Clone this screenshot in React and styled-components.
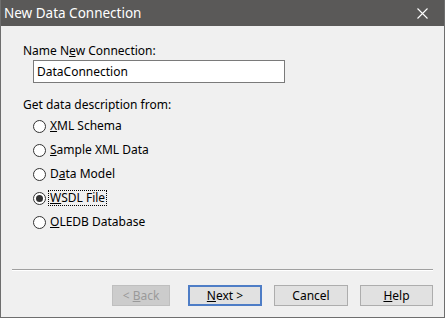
import React, { useState } from 'react'
import styled, { createGlobalStyle } from 'styled-components'

const Global = createGlobalStyle`
  html, body { margin: 0; padding: 0; background: #f0f0f0; }
  body { font-family: "Noto Sans", "Segoe UI", sans-serif; font-size: 12px; color: #000; }
`

const options = [
  { key: 'xml', pre: '', mn: 'X', post: 'ML Schema' },
  { key: 'sample', pre: '', mn: 'S', post: 'ample XML Data' },
  { key: 'model', pre: 'D', mn: 'a', post: 'ta Model' },
  { key: 'wsdl', pre: '', mn: 'W', post: 'SDL File' },
  { key: 'oledb', pre: '', mn: 'O', post: 'LEDB Database' },
]

const App = () => {
  const [name, setName] = useState('DataConnection')
  const [selected, setSelected] = useState('wsdl')

  return (
    <>
      <Global />
      <Window>
        <TitleBar>
          <Title>New Data Connection</Title>
          <CloseBtn aria-label="close">
            <svg width="11" height="11" viewBox="0 0 11 11">
              <path d="M0.5 0.5 L10.5 10.5 M10.5 0.5 L0.5 10.5" stroke="#fff" strokeWidth="1.1" />
            </svg>
          </CloseBtn>
        </TitleBar>
        <Body>
          <Label>Name N<u>e</u>w Connection:</Label>
          <TextInput value={name} onChange={e => setName(e.target.value)} />
          <GroupLabel>Get data description from:</GroupLabel>
          <RadioList>
            {options.map(o => (
              <RadioRow key={o.key} onClick={() => setSelected(o.key)}>
                <Circle $checked={selected === o.key} />
                <RadioText $focus={selected === o.key}>
                  {o.pre}<u>{o.mn}</u>{o.post}
                </RadioText>
              </RadioRow>
            ))}
          </RadioList>
        </Body>
        <Footer>
          <Separator />
          <ButtonRow>
            <Button $w={58} disabled>&lt; <u>B</u>ack</Button>
            <Button $w={74} $default style={{ marginLeft: 6 }}><u>N</u>ext &gt;</Button>
            <Button $w={74}>Cancel</Button>
            <Button $w={73}><u>H</u>elp</Button>
          </ButtonRow>
        </Footer>
      </Window>
    </>
  )
}

const Window = styled.div`
  width: 445px;
  height: 318px;
  box-sizing: border-box;
  border: 1px solid #6e6e6e;
  border-top: none;
  display: flex;
  flex-direction: column;
  background: #f0f0f0;
`

const TitleBar = styled.div`
  height: 26px;
  background: #5a5958;
  display: flex;
  align-items: center;
  justify-content: space-between;
  padding: 0 0 0 3px;
`

const Title = styled.div`
  color: #fff;
  font-size: 13.5px;
  line-height: 26px;
`

const CloseBtn = styled.div`
  width: 46px;
  height: 26px;
  display: flex;
  align-items: center;
  justify-content: center;
  margin-right: -1px;
`

const Body = styled.div`
  flex: 1;
  padding: 17px 0 0 22px;
  display: flex;
  flex-direction: column;
  align-items: flex-start;
`

const Label = styled.div`
  line-height: 16px;
  height: 16px;
`

const TextInput = styled.input`
  margin: 1px 0 0 10px;
  width: 252px;
  height: 23px;
  box-sizing: border-box;
  border: 1px solid #7a7a7a;
  background: #fff;
  font: inherit;
  padding: 0 3px;
  outline: none;
`

const GroupLabel = styled.div`
  margin-top: 14px;
  line-height: 16px;
  height: 16px;
`

const RadioList = styled.div`
  display: flex;
  flex-direction: column;
  margin: 1px 0 0 10px;
`

const RadioRow = styled.div`
  height: 24px;
  display: flex;
  align-items: center;
  gap: 2px;
  cursor: default;
`

const Circle = styled.span`
  width: 13px;
  height: 13px;
  box-sizing: border-box;
  border: 1px solid #333;
  border-radius: 50%;
  background: #fff;
  display: flex;
  align-items: center;
  justify-content: center;
  &::after {
    content: '';
    width: 7px;
    height: 7px;
    border-radius: 50%;
    background: ${p => (p.$checked ? '#333' : 'transparent')};
  }
`

const RadioText = styled.span`
  line-height: 14px;
  padding: 0 1px;
  border: 1px dotted ${p => (p.$focus ? '#000' : 'transparent')};
`

const Footer = styled.div`
  padding: 0 11px 11px 11px;
`

const Separator = styled.div`
  height: 1px;
  background: #a0a0a0;
  border-bottom: 1px solid #fff;
`

const ButtonRow = styled.div`
  margin-top: 14px;
  display: flex;
  justify-content: flex-end;
  gap: 12px;
`

const Button = styled.button`
  width: ${p => p.$w}px;
  height: 21px;
  box-sizing: border-box;
  font: inherit;
  padding: 0;
  background: ${p => (p.disabled ? '#cccccc' : '#e1e1e1')};
  border: ${p => (p.$default ? '2px solid #4e7dc6' : '1px solid ' + (p.disabled ? '#bfbfbf' : '#adadad'))};
  color: ${p => (p.disabled ? '#9a9a9a' : '#000')};
`

export default App
